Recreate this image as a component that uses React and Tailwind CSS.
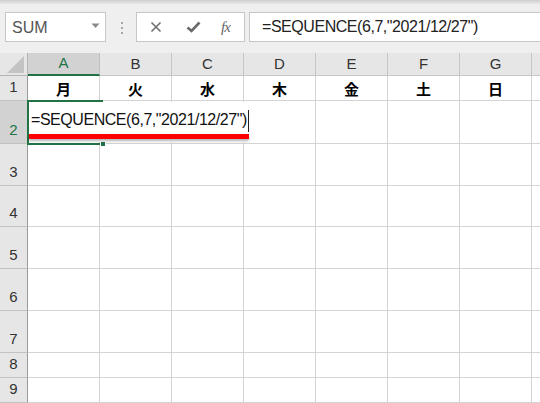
import React from "react";

const cols = ["A", "B", "C", "D", "E", "F", "G"];
const days = ["月", "火", "水", "木", "金", "土", "日"];
const rowNums = [1, 2, 3, 4, 5, 6, 7, 8, 9];

const Toolbar = () => (
  <div className="h-[53px] bg-[#efefef] flex flex-col">
    <div className="h-[4px] bg-gradient-to-b from-[#cdcdcd] to-[#e9e9e9]" />
    <div className="flex items-start pt-[8px]">
      {/* name box */}
      <div className="ml-[5px] w-[101px] h-[30px] bg-white border border-[#c6c6c6] flex items-center justify-between pl-[6px] pr-[5px]">
        <span className="text-[16px] text-[#555] font-['Liberation_Sans',sans-serif] leading-none pt-[1px]">SUM</span>
        <svg width="9" height="6" viewBox="0 0 9 6" className="mb-[3px]">
          <path d="M0.5 0.5 L8.5 0.5 L4.5 5 Z" fill="#8a8a8a" />
        </svg>
      </div>
      {/* grip dots */}
      <div className="ml-[15px] mt-[10px] flex flex-col gap-[3px]">
        <div className="w-[2px] h-[2px] bg-[#a8a8a8]" />
        <div className="w-[2px] h-[2px] bg-[#a8a8a8]" />
        <div className="w-[2px] h-[2px] bg-[#a8a8a8]" />
      </div>
      {/* cancel / enter / fx */}
      <div className="ml-[13px] w-[109px] h-[30px] bg-white border border-[#c6c6c6] flex items-center">
        <svg width="12" height="12" viewBox="0 0 12 12" className="ml-[13px]">
          <path d="M1.5 1.5 L10.5 10.5 M10.5 1.5 L1.5 10.5" stroke="#707070" strokeWidth="1.6" />
        </svg>
        <svg width="15" height="12" viewBox="0 0 15 12" className="ml-[24px]">
          <path d="M1.5 6.5 L5.5 10 L13.5 1.5" stroke="#6a6a6a" strokeWidth="2.6" fill="none" />
        </svg>
        <span className="ml-[20px] text-[15px] italic text-[#666] font-['Liberation_Serif',serif] leading-none tracking-[-1px]">fx</span>
      </div>
      {/* formula bar */}
      <div className="ml-[4px] flex-1 h-[30px] bg-white border-y border-l border-[#c6c6c6] flex items-center pl-[12px]">
        <span className="text-[16px] tracking-[-0.45px] text-[#222] font-['Liberation_Sans',sans-serif] leading-none whitespace-nowrap">
          =SEQUENCE(6,7,"2021/12/27")
        </span>
      </div>
    </div>
  </div>
);

const Sheet = () => (
  <div className="relative grid grid-cols-[28px_repeat(7,72px)_1fr] grid-rows-[23px_25px_43px_42px_41px_42px_42px_42px_25px_25px] font-['Liberation_Sans',sans-serif]">
    {/* corner */}
    <div className="bg-[#e6e6e6] border-r border-b border-[#b4b4b4] flex items-end justify-end pr-[3px] pb-[2px]">
      <svg width="17" height="17" viewBox="0 0 17 17">
        <path d="M17 0 L17 17 L0 17 Z" fill="#c3c3c3" />
      </svg>
    </div>
    {cols.map((c, i) => (
      <div
        key={c}
        className={
          i === 0
            ? "bg-[#d2d2d2] border-r border-[#c0c0c0] border-b-2 border-b-[#217346] flex items-center justify-center text-[15px] text-[#217346]"
            : "bg-[#e6e6e6] border-r border-b border-[#c6c6c6] flex items-center justify-center text-[15px] text-[#333]"
        }
      >
        {c}
      </div>
    ))}
    <div className="bg-[#e6e6e6] border-b border-[#c6c6c6]" />

    {rowNums.map((n) => (
      <React.Fragment key={n}>
        <div
          className={
            n === 2
              ? "bg-[#d2d2d2] border-r border-r-[#9b9b9b] border-b border-b-[#c2c2c2] flex items-end justify-center pb-[6px] text-[15px] leading-none text-[#217346]"
              : "bg-[#e6e6e6] border-r border-r-[#9b9b9b] border-b border-b-[#c2c2c2] flex items-end justify-center pb-[6px] text-[15px] leading-none text-[#333]"
          }
        >
          {n}
        </div>
        {cols.map((c, i) => (
          <div
            key={c}
            className="border-r border-b border-[#d4d4d4] flex items-end justify-center pb-[4px] text-[15px] leading-none font-bold text-black font-['Noto_Sans_CJK_JP',sans-serif]"
          >
            {n === 1 ? days[i] : ""}
          </div>
        ))}
        <div className="border-b border-[#d4d4d4]" />
      </React.Fragment>
    ))}

    {/* active cell selection */}
    <div className="absolute left-[27px] top-[47px] w-[76px] h-[45px] border-2 border-[#217346]" />
    <div className="absolute left-[100px] top-[88px] w-[6px] h-[6px] bg-[#217346] border border-white" />

    {/* in-cell editing overflow */}
    <div className="absolute left-[29px] top-[49px] w-[221px] h-[40px] bg-white flex items-start pl-[2px] pt-[10px]">
      <span className="text-[16px] tracking-[-0.45px] leading-none text-[#111] whitespace-nowrap">=SEQUENCE(6,7,"2021/12/27")</span>
    </div>
    <div className="absolute left-[248px] top-[57px] w-[1px] h-[22px] bg-[#222]" />

    {/* red underline marker */}
    <div className="absolute left-[29px] top-[81px] w-[220px] h-[5px] bg-[#ff0000] shadow-[0_2px_3px_rgba(0,0,0,0.3)]" />
  </div>
);

export default function App() {
  return (
    <div className="w-[540px] h-[403px] overflow-hidden bg-white">
      <Toolbar />
      <Sheet />
    </div>
  );
}
